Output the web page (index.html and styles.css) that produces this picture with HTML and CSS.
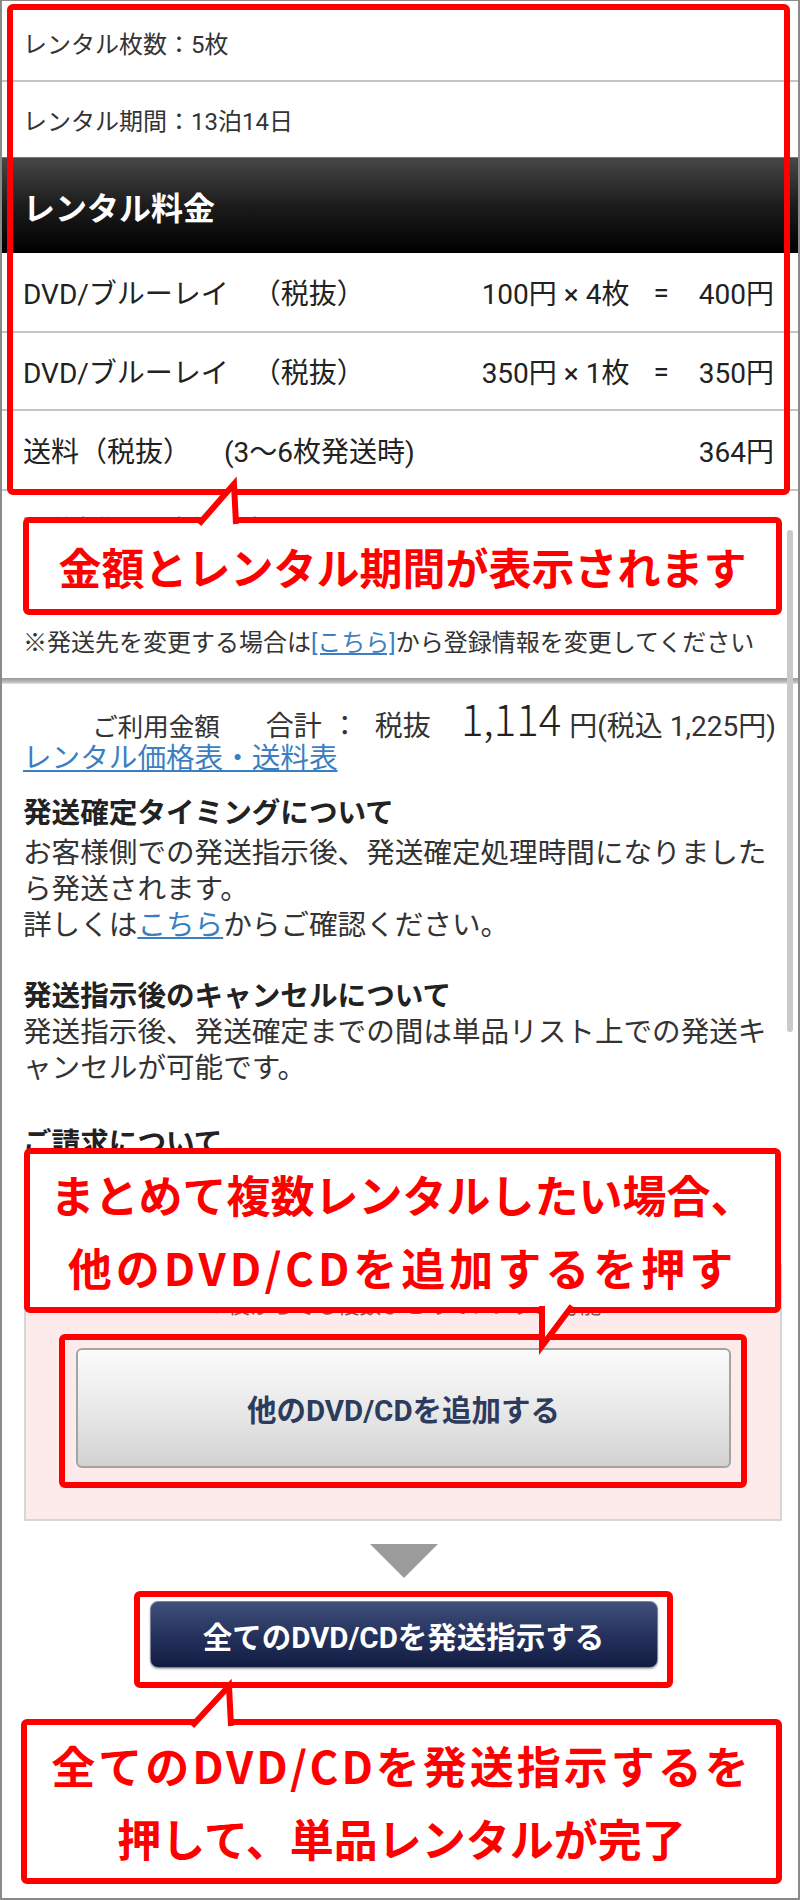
FILE: index.html
```html
<!DOCTYPE html>
<html lang="ja">
<head>
<meta charset="utf-8">
<title>レンタル料金</title>
<link rel="stylesheet" href="styles.css">
</head>
<body>
<div class="page">
  <div class="table">
    <div class="row row-s row-1">レンタル枚数：5枚</div>
    <div class="row row-s row-2">レンタル期間：13泊14日</div>
    <div class="thead">レンタル料金</div>
    <div class="row row-p h80"><span>DVD/ブルーレイ</span><span class="paren">（税抜）</span><span class="qty">100円 × 4枚</span><span class="eq">=</span><span class="amt">400円</span></div>
    <div class="row row-p h78"><span>DVD/ブルーレイ</span><span class="paren">（税抜）</span><span class="qty">350円 × 1枚</span><span class="eq">=</span><span class="amt">350円</span></div>
    <div class="row row-p h80"><span>送料（税抜）</span><span class="ship-note">(3〜6枚発送時)</span><span class="amt amt-auto">364円</span></div>
  </div>

  <div class="content">
    <p class="addr">配送先住所：東京都渋谷区</p>
    <p class="notice">※発送先を変更する場合は<a class="blue" href="#">[こちら]</a>から登録情報を変更してください</p>
  </div>
  <div class="divider"></div>

  <div class="summary">
    <span class="s-label">ご利用金額</span><span class="s-total">合計</span><span class="s-colon">：</span><span class="s-tax">税抜</span><span class="big">1,114</span><span>円(税込 1,225円)</span>
  </div>

  <div class="content">
    <p class="link-line"><a class="blue" href="#">レンタル価格表・送料表</a></p>
    <p class="h h1">発送確定タイミングについて</p>
    <p class="p p1">お客様側での発送指示後、発送確定処理時間になりましたら発送されます。<br>詳しくは<a class="blue" href="#">こちら</a>からご確認ください。</p>
    <p class="h h2">発送指示後のキャンセルについて</p>
    <p class="p p2">発送指示後、発送確定までの間は単品リスト上での発送キャンセルが可能です。</p>
    <p class="h h3">ご請求について</p>
  </div>

  <div class="pink">
    <p class="pink-text">※後からでも複数まとめてレンタル可能</p>
    <div class="btn-gray">他のDVD/CDを追加する</div>
  </div>

  <div class="send-wrap">
    <div class="arrow"></div>
    <div class="btn-navy">全てのDVD/CDを発送指示する</div>
  </div>

  <!-- annotation overlays -->
  <div class="scrollbar"></div>
  <div class="redbox rb1"></div>
  <div class="redbox rb2"></div>
  <div class="redbox rb3"></div>
  <div class="callout c1"><span>金額とレンタル期間が表示されます</span></div>
  <div class="callout c2"><span>まとめて複数レンタルしたい場合、</span><span class="ls4">他のDVD/CDを追加するを押す</span></div>
  <div class="callout c3"><span class="ls3">全てのDVD/CDを発送指示するを</span><span>押して、単品レンタルが完了</span></div>
  <svg class="tails" width="800" height="1900" viewBox="0 0 800 1900">
    <polyline points="199,524 234,484 236,524" fill="#fff" stroke="#ff0000" stroke-width="6" stroke-linejoin="miter"/>
    <polyline points="542,1306 542,1346 572,1306" fill="#fff" stroke="#ff0000" stroke-width="6" stroke-linejoin="miter"/>
    <polyline points="192,1726 229,1686 231,1726" fill="#fff" stroke="#ff0000" stroke-width="6" stroke-linejoin="miter"/>
  </svg>
</div>
</body>
</html>
```

FILE: styles.css
```css
* { box-sizing: border-box; }

body {
  margin: 0;
  background: #fff;
  font-family: Roboto, "Noto Sans CJK JP", sans-serif;
  color: #333;
}

p { margin: 0; }

.page {
  position: relative;
  width: 800px;
  height: 1900px;
  border: 2px solid #8a8a8a;
  border-top-width: 1px;
  overflow: hidden;
  background: #fff;
}

/* ---------- table ---------- */
.row {
  display: flex;
  align-items: center;
  padding: 0 24px 0 21px;
  border-bottom: 2px solid #c4c4c4;
  white-space: nowrap;
}
.row-s { font-size: 24px; color: #333; }
.row-1 { height: 81px; padding-top: 4px; }
.row-2 { height: 75px; border-bottom: 0; }

.thead {
  height: 96px;
  display: flex;
  align-items: center;
  padding-left: 21px;
  background: linear-gradient(#474747, #1c1c1c 50%, #000);
  border-top: 1px solid #777;
  color: #fff;
  font-weight: 700;
  font-size: 32px;
}

.row-p { font-size: 28px; color: #222; }
.h80 { height: 80px; }
.h78 { height: 78px; }
.paren { margin-left: 24px; }
.qty { margin-left: auto; }
.eq { margin: 0 30px 0 24px; }
.amt { min-width: 75px; text-align: right; }
.amt-auto { margin-left: auto; }
.ship-note { margin-left: 33px; }

/* ---------- content ---------- */
.content { padding: 0 27px 0 21px; }

.addr { margin-top: 20px; font-size: 24px; line-height: 36px; color: #666; }
.notice { margin-top: 78px; font-size: 24px; line-height: 36px; color: #333; white-space: nowrap; }

.blue { color: #3b7fc2; text-decoration: underline; }

.divider {
  margin-top: 17px;
  height: 6px;
  background: linear-gradient(#9a9a9a, #b8b8b8 60%, #e6e6e6);
}

.summary {
  display: flex;
  justify-content: flex-end;
  align-items: baseline;
  height: 58px;
  padding: 12px 22px 0 0;
  font-size: 28px;
  line-height: 44px;
  color: #333;
  white-space: nowrap;
}
.s-label { margin-right: 46px; font-size: 25.5px; }
.s-total { margin-right: 9px; }
.s-colon { margin-right: 16px; }
.s-tax { margin-right: 30px; }
.big {
  font-family: "Noto Sans CJK JP", sans-serif;
  font-weight: 300;
  font-size: 42px;
  margin-right: 8px;
  color: #222;
}

.link-line { margin-top: -2px; font-size: 28.6px; line-height: 36px; }

.h {
  font-weight: 700;
  font-size: 28.6px;
  line-height: 36px;
  color: #222;
}
.h1 { margin-top: 19px; }
.h2 { margin-top: 35px; }
.h3 { margin-top: 39px; }

.p {
  font-size: 28.6px;
  line-height: 36px;
  color: #333;
  line-break: loose;
}
.p1 { margin-top: 4px; }

/* ---------- pink box ---------- */
.pink {
  margin: 103px 16px 0 22px;
  border: 2px solid #d6d6d6;
  background: #fdebeb;
  padding: 25px 49px 51px 50px;
}
.pink-text {
  text-align: center;
  font-size: 22px;
  line-height: 30px;
  color: #666;
}
.btn-gray {
  margin-top: 27px;
  height: 120px;
  display: flex;
  align-items: center;
  justify-content: center;
  border: 2px solid #a4a4a4;
  border-radius: 6px;
  background: linear-gradient(#fbfbfb, #e9e9e9 50%, #d2d2d2);
  color: #2d3b5d;
  font-weight: 700;
  font-size: 29.5px;
}

/* ---------- send ---------- */
.send-wrap {
  display: flex;
  flex-direction: column;
  align-items: center;
  padding-left: 7px;
}
.arrow {
  margin-top: 23px;
  width: 0;
  height: 0;
  border-left: 34px solid transparent;
  border-right: 34px solid transparent;
  border-top: 34px solid #9b9b9b;
}
.btn-navy {
  margin-top: 23px;
  width: 508px;
  height: 67px;
  display: flex;
  align-items: center;
  justify-content: center;
  border: 1px solid #7d849a;
  border-radius: 8px;
  background: linear-gradient(#3f507b, #26335e 50%, #121c42);
  box-shadow: 0 1px 2px rgba(0,0,0,.35);
  color: #fff;
  font-weight: 700;
  font-size: 29.5px;
}

/* ---------- overlays ---------- */
.scrollbar {
  position: absolute;
  left: 785px;
  top: 529px;
  width: 6px;
  height: 502px;
  border-radius: 3px;
  background: #c9c9c9;
}

.redbox {
  position: absolute;
  border: 6px solid #ff0000;
  border-radius: 6px;
}
.rb1 { left: 5px; top: 3px; width: 783px; height: 491px; }
.rb2 { left: 57px; top: 1333px; width: 688px; height: 154px; }
.rb3 { left: 132px; top: 1590px; width: 539px; height: 97px; }

.callout {
  position: absolute;
  display: flex;
  flex-direction: column;
  justify-content: center;
  align-items: center;
  background: #fff;
  border: 6px solid #ff0000;
  border-radius: 6px;
  color: #ff0000;
  font-family: "Noto Sans CJK JP", sans-serif;
  font-weight: 700;
  font-size: 44px;
  line-height: 73px;
  white-space: nowrap;
}
.c1 { left: 21px; top: 516px; width: 759px; height: 98px; font-size: 43px; }
.c2 { left: 22px; top: 1147px; width: 757px; height: 165px; }
.c3 { left: 19px; top: 1718px; width: 761px; height: 165px; }
.ls4 { letter-spacing: 4px; }
.ls3 { letter-spacing: 3px; }

.tails {
  position: absolute;
  left: -2px;
  top: -1px;
  pointer-events: none;
}
```
